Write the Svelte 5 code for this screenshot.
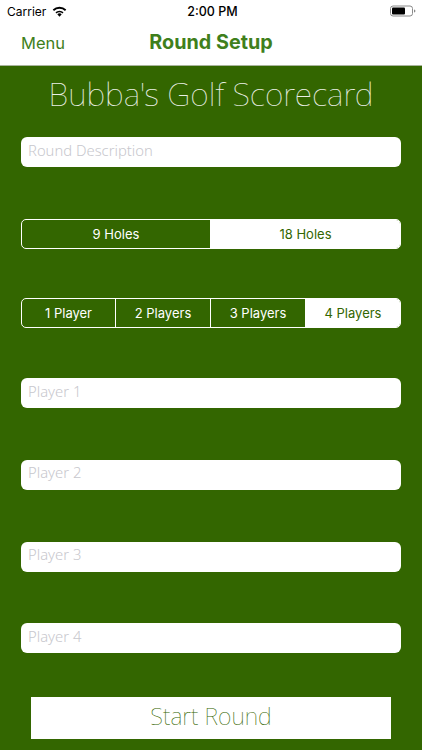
<script lang="ts">
  const holes = ['9 Holes', '18 Holes'];
  const players = ['1 Player', '2 Players', '3 Players', '4 Players'];

  let description = $state('');
  let names = $state(['', '', '', '']);
  let holeIndex = $state(0);
  let playerIndex = $state(3);
</script>

<div class="screen">
  <header class="top">
    <div class="status">
      <span class="carrier">Carrier</span>
      <svg class="wifi" width="15" height="11" viewBox="0 0 16 12" aria-hidden="true">
        <path d="M8 11.6 5.6 9a3.4 3.4 0 0 1 4.8 0Z" fill="#000" />
        <path d="M3.6 6.9a6.2 6.2 0 0 1 8.8 0l-1.2 1.3a4.5 4.5 0 0 0-6.4 0Z" fill="#000" />
        <path d="M.6 3.9a10.4 10.4 0 0 1 14.8 0l-1.4 1.5a8.4 8.4 0 0 0-12 0Z" fill="#000" />
      </svg>
      <span class="time">2:00 PM</span>
      <svg class="battery" width="26" height="12" viewBox="0 0 26 12" aria-hidden="true">
        <rect x="0.5" y="1" width="22" height="10" rx="2.5" fill="none" stroke="#8a8a8a" />
        <rect x="2" y="2.5" width="13" height="7" rx="1" fill="#000" />
        <path d="M24 4.5c1 .3 1.4.8 1.4 1.5s-.4 1.2-1.4 1.5Z" fill="#8a8a8a" />
      </svg>
    </div>
    <nav class="nav">
      <button class="menu" type="button">Menu</button>
      <h1>Round Setup</h1>
    </nav>
  </header>

  <main class="content">
    <h2>Bubba's Golf Scorecard</h2>

    <input class="field" type="text" placeholder="Round Description" bind:value={description} />

    <div class="segments holes">
      {#each holes as label, i}
        <button type="button" class:selected={holeIndex !== i} onclick={() => (holeIndex = i)}>{label}</button>
      {/each}
    </div>

    <div class="segments players">
      {#each players as label, i}
        <button type="button" class:selected={playerIndex === i} onclick={() => (playerIndex = i)}>{label}</button>
      {/each}
    </div>

    <div class="names">
      {#each names as _, i}
        <input class="field" type="text" placeholder={`Player ${i + 1}`} bind:value={names[i]} />
      {/each}
    </div>

    <button class="start" type="button">Start Round</button>
  </main>
</div>

<style>
  :global(body) {
    margin: 0;
    background: #336600;
  }

  .screen {
    width: 422px;
    height: 750px;
    overflow: hidden;
    display: flex;
    flex-direction: column;
    font-family: Inter, "Liberation Sans", sans-serif;
  }

  .top {
    background: #fff;
    height: 65px;
    border-bottom: 1px solid #a9b59d;
  }

  .status {
    height: 22px;
    position: relative;
    display: flex;
    align-items: center;
    padding: 0 6px 0 7px;
    font-size: 13px;
    color: #000;
  }

  .carrier {
    font-size: 12px;
  }

  .wifi {
    margin-left: 6px;
  }

  .time {
    position: absolute;
    left: 3px;
    right: 0;
    text-align: center;
    font-weight: 500;
    font-size: 12.5px;
  }

  .battery {
    margin-left: auto;
  }

  .nav {
    height: 43px;
    position: relative;
    display: flex;
    align-items: center;
    justify-content: center;
  }

  .menu {
    position: absolute;
    left: 21px;
    top: 11px;
    padding: 0;
    border: none;
    background: none;
    font-family: inherit;
    font-size: 16.5px;
    color: #3f7f1c;
  }

  h1 {
    margin: -4px 0 0;
    font-size: 19.8px;
    font-weight: 700;
    color: #3f7f1c;
  }

  .content {
    flex: 1;
    background: #336600;
    display: flex;
    flex-direction: column;
    padding: 0 21px;
  }

  h2 {
    margin: 7px 0 22px;
    height: 42px;
    line-height: 42px;
    text-align: center;
    font-family: "Noto Sans", sans-serif;
    font-size: 32px;
    font-weight: 100;
    color: #fff;
    opacity: 0.9;
    white-space: nowrap;
  }

  .field {
    box-sizing: border-box;
    display: block;
    width: 100%;
    height: 30px;
    padding: 0 7px 5px;
    border: none;
    border-radius: 6px;
    background: #fff;
    font-family: "Noto Sans", sans-serif;
    font-size: 14.8px;
    font-weight: 300;
    outline: none;
  }

  .field::placeholder {
    color: #c7c7cd;
    opacity: 1;
  }

  .segments {
    display: grid;
    box-sizing: border-box;
    height: 30px;
    border: 1px solid #fff;
    border-radius: 5px;
    overflow: hidden;
  }

  .holes {
    grid-template-columns: 188px 1fr;
    margin-top: 52px;
  }

  .players {
    grid-template-columns: 93px 95px 95px 1fr;
    margin-top: 49px;
  }

  .segments button {
    padding: 0;
    border: none;
    background: none;
    font-family: Inter, "Liberation Sans", sans-serif;
    font-size: 13px;
    color: #fff;
  }

  .segments button + button {
    border-left: 1px solid #fff;
  }

  .segments .selected {
    background: #fff;
    color: #336600;
  }

  .names {
    margin-top: 50px;
    display: flex;
    flex-direction: column;
    gap: 51.8px;
  }

  .start {
    align-self: center;
    width: 360px;
    height: 42px;
    margin-top: 44px;
    padding: 0 0 5px;
    border: none;
    background: #fff;
    font-family: "Noto Sans", sans-serif;
    font-size: 23.3px;
    font-weight: 100;
    color: #336600;
  }
</style>
